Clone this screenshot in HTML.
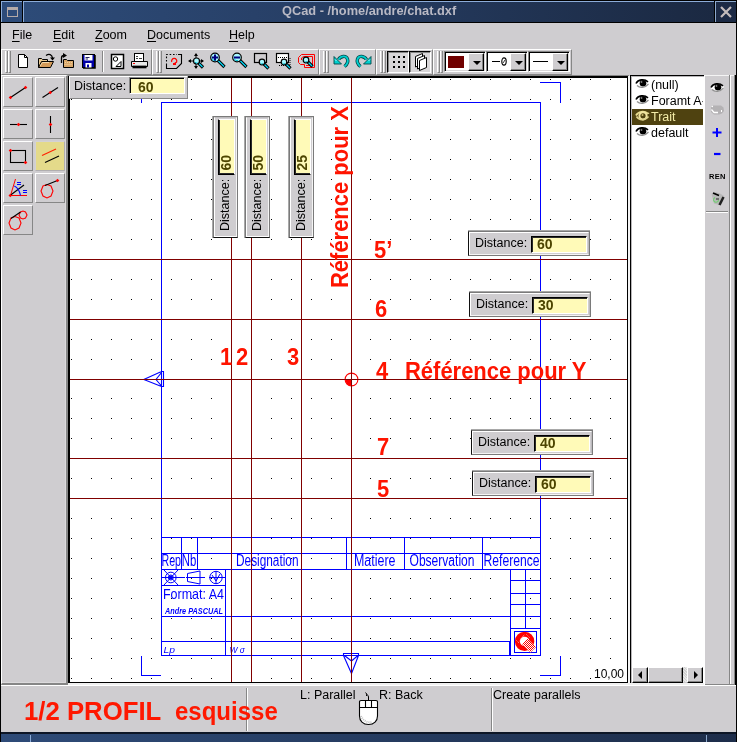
<!DOCTYPE html><html><head><meta charset="utf-8"><style>
*{box-sizing:border-box}
html,body{margin:0;padding:0}
body{width:737px;height:742px;overflow:hidden;background:#cfcdd0;position:relative;font-family:"Liberation Sans",sans-serif;color:#000}
.a{position:absolute}
.t{white-space:pre;line-height:1}
svg{position:absolute;overflow:visible}
</style></head><body><div class="a" style="left:0;top:0;width:737px;height:742px;will-change:transform;overflow:hidden"><div class="a" style="left:0px;top:0px;width:737px;height:23px;background:#000"></div>
<div class="a" style="left:1px;top:1px;width:21px;height:21px;background:#2d4b79;border-top:1px solid #8cacd8;border-left:1px solid #8cacd8"></div>
<div class="a" style="left:7px;top:7px;width:11px;height:10px;border:1px solid #b4aaa8;border-top:3px solid #b4aaa8"></div>
<div class="a" style="left:23px;top:1px;width:691px;height:21px;background:linear-gradient(90deg,#2d4b78 0%,#273f66 40%,#1b2942 100%);border-top:1px solid #8cacd8;border-left:1px solid #8cacd8"></div>
<div class="a t" style="left:282px;top:5px;font-size:12.8px;font-weight:bold;color:#b9b9c4">QCad - /home/andre/chat.dxf</div>
<div class="a" style="left:715px;top:1px;width:21px;height:21px;background:#1c2a45;border-top:1px solid #8ca8cc;border-left:1px solid #8ca8cc"></div>
<svg style="left:715px;top:1px" width="21" height="20"><path d="M6 6L16 16M16 6L6 16" stroke="#c4bcbc" stroke-width="2.2"/></svg>
<div class="a" style="left:0px;top:0px;width:1px;height:742px;background:#000"></div>
<div class="a" style="left:736px;top:0px;width:1px;height:742px;background:#000"></div>
<div class="a t" style="left:12px;top:28.5px;font-size:12.5px"><u style="text-underline-offset:1.5px">F</u>ile</div>
<div class="a t" style="left:53px;top:28.5px;font-size:12.5px"><u style="text-underline-offset:1.5px">E</u>dit</div>
<div class="a t" style="left:95px;top:28.5px;font-size:12.5px"><u style="text-underline-offset:1.5px">Z</u>oom</div>
<div class="a t" style="left:147px;top:28.5px;font-size:12.5px"><u style="text-underline-offset:1.5px">D</u>ocuments</div>
<div class="a t" style="left:229px;top:28.5px;font-size:12.5px"><u style="text-underline-offset:1.5px">H</u>elp</div>
<div class="a" style="left:1px;top:49px;width:151px;height:26px;border-top:1px solid #fff;border-left:1px solid #fff;border-right:1px solid #868686;border-bottom:1px solid #868686"></div>
<div class="a" style="left:152px;top:49px;width:167px;height:26px;border-top:1px solid #fff;border-left:1px solid #fff;border-right:1px solid #868686;border-bottom:1px solid #868686"></div>
<div class="a" style="left:319px;top:49px;width:57px;height:26px;border-top:1px solid #fff;border-left:1px solid #fff;border-right:1px solid #868686;border-bottom:1px solid #868686"></div>
<div class="a" style="left:376px;top:49px;width:57px;height:26px;border-top:1px solid #fff;border-left:1px solid #fff;border-right:1px solid #868686;border-bottom:1px solid #868686"></div>
<div class="a" style="left:433px;top:49px;width:139px;height:26px;border-top:1px solid #fff;border-left:1px solid #fff;border-right:1px solid #868686;border-bottom:1px solid #868686"></div>
<div class="a" style="left:67px;top:75px;width:562px;height:1px;background:#868686"></div>
<div class="a" style="left:5px;top:51px;width:3px;height:22px;border-left:1px solid #fff;border-right:1px solid #868686;border-bottom:1px solid #868686"></div>
<div class="a" style="left:8px;top:51px;width:3px;height:22px;border-left:1px solid #fff;border-right:1px solid #868686;border-bottom:1px solid #868686"></div>
<div class="a" style="left:156px;top:51px;width:3px;height:22px;border-left:1px solid #fff;border-right:1px solid #868686;border-bottom:1px solid #868686"></div>
<div class="a" style="left:159px;top:51px;width:3px;height:22px;border-left:1px solid #fff;border-right:1px solid #868686;border-bottom:1px solid #868686"></div>
<div class="a" style="left:323px;top:51px;width:3px;height:22px;border-left:1px solid #fff;border-right:1px solid #868686;border-bottom:1px solid #868686"></div>
<div class="a" style="left:326px;top:51px;width:3px;height:22px;border-left:1px solid #fff;border-right:1px solid #868686;border-bottom:1px solid #868686"></div>
<div class="a" style="left:380px;top:51px;width:3px;height:22px;border-left:1px solid #fff;border-right:1px solid #868686;border-bottom:1px solid #868686"></div>
<div class="a" style="left:383px;top:51px;width:3px;height:22px;border-left:1px solid #fff;border-right:1px solid #868686;border-bottom:1px solid #868686"></div>
<div class="a" style="left:437px;top:51px;width:3px;height:22px;border-left:1px solid #fff;border-right:1px solid #868686;border-bottom:1px solid #868686"></div>
<div class="a" style="left:440px;top:51px;width:3px;height:22px;border-left:1px solid #fff;border-right:1px solid #868686;border-bottom:1px solid #868686"></div>
<div class="a" style="left:387px;top:51px;width:22px;height:22px;border-top:1px solid #000;border-left:1px solid #000;border-right:1px solid #fff;border-bottom:1px solid #fff;box-shadow:inset 1px 1px 0 #868686;background:#d8d6d8"></div>
<div class="a" style="left:409px;top:51px;width:22px;height:22px;border-top:1px solid #000;border-left:1px solid #000;border-right:1px solid #fff;border-bottom:1px solid #fff;box-shadow:inset 1px 1px 0 #868686;background:#d8d6d8"></div>
<div class="a" style="left:444px;top:51px;width:42px;height:21px;background:#fff;border-top:1px solid #868686;border-left:1px solid #868686;border-right:1px solid #fff;border-bottom:1px solid #fff;box-shadow:inset 1px 1px 0 #000, inset -1px -1px 0 #d8d6d8"></div>
<div class="a" style="left:448px;top:56px;width:16px;height:12px;background:#700000"></div>
<div class="a" style="left:468px;top:53px;width:16px;height:18px;background:#cfcdd0;border-top:1px solid #fff;border-left:1px solid #fff;border-right:1px solid #000;border-bottom:1px solid #000;box-shadow:inset -1px -1px 0 #868686"></div>
<svg style="left:473px;top:61px" width="8" height="4"><path d="M0 0H8L4 4Z" fill="#000"/></svg>
<div class="a" style="left:486px;top:51px;width:42px;height:21px;background:#fff;border-top:1px solid #868686;border-left:1px solid #868686;border-right:1px solid #fff;border-bottom:1px solid #fff;box-shadow:inset 1px 1px 0 #000, inset -1px -1px 0 #d8d6d8"></div>
<div class="a" style="left:492px;top:61px;width:8px;height:1px;background:#000"></div><svg style="left:501px;top:57px" width="7" height="9"><ellipse cx="3" cy="4.5" rx="2.2" ry="3.6" fill="none" stroke="#000" stroke-width="1.1"/><path d="M2 6L4 3" stroke="#000" stroke-width="0.8"/></svg>
<div class="a" style="left:510px;top:53px;width:16px;height:18px;background:#cfcdd0;border-top:1px solid #fff;border-left:1px solid #fff;border-right:1px solid #000;border-bottom:1px solid #000;box-shadow:inset -1px -1px 0 #868686"></div>
<svg style="left:515px;top:61px" width="8" height="4"><path d="M0 0H8L4 4Z" fill="#000"/></svg>
<div class="a" style="left:528px;top:51px;width:42px;height:21px;background:#fff;border-top:1px solid #868686;border-left:1px solid #868686;border-right:1px solid #fff;border-bottom:1px solid #fff;box-shadow:inset 1px 1px 0 #000, inset -1px -1px 0 #d8d6d8"></div>
<div class="a" style="left:533px;top:61px;width:15px;height:1px;background:#000"></div>
<div class="a" style="left:552px;top:53px;width:16px;height:18px;background:#cfcdd0;border-top:1px solid #fff;border-left:1px solid #fff;border-right:1px solid #000;border-bottom:1px solid #000;box-shadow:inset -1px -1px 0 #868686"></div>
<svg style="left:557px;top:61px" width="8" height="4"><path d="M0 0H8L4 4Z" fill="#000"/></svg>
<svg style="left:0;top:45px" width="600" height="33" viewBox="0 45 600 33"><path d="M18.5 54.5H24.5L27.5 57.5V67.5H18.5Z" fill="#fff" stroke="#000"/><path d="M24.5 54.5V57.5H27.5" fill="none" stroke="#000"/><path d="M38.5 67.5V58.5H41.5L42.5 59.5H47.5V61.5" fill="#e8c890" stroke="#000"/><path d="M38.5 67.5L41.5 61.5H53.5L50.5 67.5Z" fill="#d49a58" stroke="#000"/><path d="M40 66L42.5 62.5H49" stroke="#f4dcb0" fill="none"/><path d="M46 55.5C49 53.5 52 54.5 52.5 58" fill="none" stroke="#000" stroke-width="1.3"/><path d="M50 57.5H55L52.5 60.5Z" fill="#000"/><path d="M63.5 67.5V59.5H66.5L67.5 60.5H73.5V67.5Z" fill="#d9a86a" stroke="#000"/><path d="M65 62.5H72M64.5 64.5H72" stroke="#f0d0a0" stroke-dasharray="1 1"/><path d="M61.5 63V58C61.5 56 62.5 55.5 64 55.5" fill="none" stroke="#000" stroke-width="1.3"/><path d="M63 53L67 55.5L63 58Z" fill="#000"/><rect x="82.5" y="54.5" width="12" height="13" fill="#0000a8" stroke="#000"/><rect x="84.5" y="55" width="8" height="5.5" fill="#fff"/><path d="M85.5 57.5H89.5M85.5 59H88" stroke="#202060"/><rect x="85.5" y="63" width="6" height="4.5" fill="#fff"/><rect x="87" y="64.5" width="2" height="3" fill="#0000a8"/><path d="M95.5 55V68.5H83" stroke="#303030" fill="none"/><path d="M102.5 51V72" stroke="#868686"/><path d="M103.5 51V72" stroke="#fff"/><rect x="111.5" y="54.5" width="12" height="14" fill="#fff" stroke="#000" stroke-width="1.5"/><circle cx="115.5" cy="59" r="2.2" fill="none" stroke="#000"/><path d="M121 61.5V66.5H116Z" fill="none" stroke="#000"/><rect x="134.5" y="53.5" width="9" height="8" fill="#fff" stroke="#000"/><path d="M136 56.5H138M136 58.5H138M139 58.5H142" stroke="#404040"/><path d="M131.5 61.5H147.5V66.5H131.5Z" fill="#e8e8e8" stroke="#000"/><path d="M133 63.5H135" stroke="#ff0000" stroke-width="1.2"/><path d="M132.5 65.5H146.5" stroke="#909090"/><path d="M132.5 67.5H146.5" stroke="#000" stroke-width="1.6"/><path d="M166.5 65V54.5H177" fill="none" stroke="#000" stroke-dasharray="1.6 1.8" stroke-width="1.1"/><path d="M178 54.5H181.5V63.5L176.5 68.5H166.5V65" fill="none" stroke="#000" stroke-width="1.1"/><path d="M171.8 62A2.6 2.6 0 1 1 176.6 62L174.5 63.5" fill="none" stroke="#ff0000" stroke-width="1.2"/><path d="M173 63H176V65H173Z" fill="#ff0000"/><path d="M196 54V68M189 61H203" stroke="#000"/><path d="M196 53L194 56H198ZM196 69L194 66H198ZM188 61L191 59V63ZM204 61L201 59V63Z" fill="#000"/><path d="M198.5 63L203.0 67.5" stroke="#000" stroke-width="3.2"/><path d="M199.0 63.5L202.5 67.0" stroke="#00d8f8" stroke-width="1.3"/><circle cx="196.5" cy="61" r="3" fill="#a8f8ff" stroke="#000" stroke-width="1.2"/><path d="M195.0 62A1.8 1.8 0 0 0 197.5 62.8" stroke="#00c0d0" fill="none" stroke-width="1"/><path d="M217 59.5L224.5 67.0" stroke="#000" stroke-width="3.2"/><path d="M217.5 60.0L224.0 66.5" stroke="#00d8f8" stroke-width="1.3"/><circle cx="215" cy="57.5" r="4.3" fill="#a8f8ff" stroke="#000" stroke-width="1.2"/><path d="M212.2 58.5A3.0999999999999996 3.0999999999999996 0 0 0 216 60.599999999999994" stroke="#00c0d0" fill="none" stroke-width="1"/><path d="M212 57.5H218M215 54.5V60.5" stroke="#000080" stroke-width="2"/><path d="M239 59.5L246.5 67.0" stroke="#000" stroke-width="3.2"/><path d="M239.5 60.0L246.0 66.5" stroke="#00d8f8" stroke-width="1.3"/><circle cx="237" cy="57.5" r="4.3" fill="#a8f8ff" stroke="#000" stroke-width="1.2"/><path d="M234.2 58.5A3.0999999999999996 3.0999999999999996 0 0 0 238 60.599999999999994" stroke="#00c0d0" fill="none" stroke-width="1"/><path d="M234 57.5H240" stroke="#000080" stroke-width="2"/><rect x="254.5" y="53.5" width="12" height="9" fill="none" stroke="#000" stroke-width="1.2"/><path d="M264 64L268.5 68.5" stroke="#000" stroke-width="3.2"/><path d="M264.5 64.5L268.0 68.0" stroke="#00d8f8" stroke-width="1.3"/><circle cx="262" cy="62" r="2.8" fill="#a8f8ff" stroke="#000" stroke-width="1.2"/><path d="M260.7 63A1.5999999999999999 1.5999999999999999 0 0 0 263 63.599999999999994" stroke="#00c0d0" fill="none" stroke-width="1"/><rect x="276.5" y="53.5" width="12" height="9" fill="#fff" stroke="#000" stroke-width="1.2"/><path d="M278 57.5H287M279 65.5H290M290 58V66" stroke="#000" stroke-dasharray="1 1"/><path d="M286 64L290.5 68.5" stroke="#000" stroke-width="3.2"/><path d="M286.5 64.5L290.0 68.0" stroke="#00d8f8" stroke-width="1.3"/><circle cx="284" cy="62" r="2.8" fill="#a8f8ff" stroke="#000" stroke-width="1.2"/><path d="M282.7 63A1.5999999999999999 1.5999999999999999 0 0 0 285 63.599999999999994" stroke="#00c0d0" fill="none" stroke-width="1"/><path d="M298.5 60V57.5L301.5 54.5H314.5V67.5H304.5V64.5H300.5L298.5 62.5Z" fill="none" stroke="#ff0000"/><path d="M301.5 60V58L303.5 56.5H312.5V65.5H306" fill="none" stroke="#ff0000"/><path d="M308 62L312.5 66.5" stroke="#000" stroke-width="3.2"/><path d="M308.5 62.5L312.0 66.0" stroke="#00d8f8" stroke-width="1.3"/><circle cx="306" cy="60" r="2.8" fill="#a8f8ff" stroke="#000" stroke-width="1.2"/><path d="M304.7 61A1.5999999999999999 1.5999999999999999 0 0 0 307 61.599999999999994" stroke="#00c0d0" fill="none" stroke-width="1"/><path d="M338.5 59.5C340.5 56 346 55 347.5 59C348.5 62 347 64.5 344.5 66.5" fill="none" stroke="#004848" stroke-width="3.4"/><path d="M338.5 59.5C340.5 56 346 55 347.5 59C348.5 62 347 64.5 344.5 66.5" fill="none" stroke="#00d0d0" stroke-width="1.8"/><path d="M334 56.5L334 64L341.5 64Z" fill="#00d0d0" stroke="#004848" stroke-width="0.9" stroke-linejoin="round"/><path d="M335 59.5L336.5 61" stroke="#a0ffff" stroke-width="1"/><path d="M366.5 59.5C364.5 56 359 55 357.5 59C356.5 62 358 64.5 360.5 66.5" fill="none" stroke="#004848" stroke-width="3.4"/><path d="M366.5 59.5C364.5 56 359 55 357.5 59C356.5 62 358 64.5 360.5 66.5" fill="none" stroke="#00d0d0" stroke-width="1.8"/><path d="M371 56.5L371 64L363.5 64Z" fill="#00d0d0" stroke="#004848" stroke-width="0.9" stroke-linejoin="round"/><path d="M370 59.5L368.5 61" stroke="#a0ffff" stroke-width="1"/><rect x="393" y="56" width="2" height="2" fill="#000"/><rect x="393" y="61" width="2" height="2" fill="#000"/><rect x="393" y="66" width="2" height="2" fill="#000"/><rect x="398" y="56" width="2" height="2" fill="#000"/><rect x="398" y="61" width="2" height="2" fill="#000"/><rect x="398" y="66" width="2" height="2" fill="#000"/><rect x="403" y="56" width="2" height="2" fill="#000"/><rect x="403" y="61" width="2" height="2" fill="#000"/><rect x="403" y="66" width="2" height="2" fill="#000"/><path d="M415.5 56.5L422.5 53.5V64L415.5 67Z" fill="#fff" stroke="#000" stroke-linejoin="round"/><path d="M417.5 58.5L424.5 55.5V66L417.5 69Z" fill="#fff" stroke="#000" stroke-linejoin="round"/><path d="M419.5 60.5L426.5 57.5V67.5L419.5 70.5Z" fill="#fff" stroke="#000" stroke-linejoin="round"/></svg>
<div class="a" style="left:1px;top:75px;width:67px;height:610px;border-top:1px solid #fff;border-left:1px solid #fff;border-right:2px solid #868686;border-bottom:2px solid #868686;box-shadow:inset -1px -1px 0 #dcdadc"></div>
<div class="a" style="left:3px;top:77px;width:30px;height:30px;background:#cfcdd0;border-top:1px solid #fff;border-left:1px solid #fff;border-right:1px solid #868686;border-bottom:1px solid #868686"></div>
<div class="a" style="left:35px;top:77px;width:30px;height:30px;background:#cfcdd0;border-top:1px solid #fff;border-left:1px solid #fff;border-right:1px solid #868686;border-bottom:1px solid #868686"></div>
<div class="a" style="left:3px;top:109px;width:30px;height:30px;background:#cfcdd0;border-top:1px solid #fff;border-left:1px solid #fff;border-right:1px solid #868686;border-bottom:1px solid #868686"></div>
<div class="a" style="left:35px;top:109px;width:30px;height:30px;background:#cfcdd0;border-top:1px solid #fff;border-left:1px solid #fff;border-right:1px solid #868686;border-bottom:1px solid #868686"></div>
<div class="a" style="left:3px;top:141px;width:30px;height:30px;background:#cfcdd0;border-top:1px solid #fff;border-left:1px solid #fff;border-right:1px solid #868686;border-bottom:1px solid #868686"></div>
<div class="a" style="left:35px;top:141px;width:30px;height:30px;background:#e4da8a;border:1px solid #d4d2d4;border-right-color:#b0aeb0;border-bottom-color:#b0aeb0"></div>
<div class="a" style="left:3px;top:173px;width:30px;height:30px;background:#cfcdd0;border-top:1px solid #fff;border-left:1px solid #fff;border-right:1px solid #868686;border-bottom:1px solid #868686"></div>
<div class="a" style="left:35px;top:173px;width:30px;height:30px;background:#cfcdd0;border-top:1px solid #fff;border-left:1px solid #fff;border-right:1px solid #868686;border-bottom:1px solid #868686"></div>
<div class="a" style="left:3px;top:205px;width:30px;height:30px;background:#cfcdd0;border-top:1px solid #fff;border-left:1px solid #fff;border-right:1px solid #868686;border-bottom:1px solid #868686"></div>
<svg style="left:0;top:74px" width="68" height="170" viewBox="0 74 68 170"><path d="M10.5 97.5L25.5 87.5" stroke="#000" stroke-width="1.1"/><path d="M10.5 95.7L12.3 97.5L10.5 99.3L8.7 97.5Z" fill="#ff0000"/><path d="M25.5 85.7L27.3 87.5L25.5 89.3L23.7 87.5Z" fill="#ff0000"/><path d="M42.5 97.5L58 87.5" stroke="#000" stroke-width="1.1"/><path d="M50.3 90.7L52.099999999999994 92.5L50.3 94.3L48.5 92.5Z" fill="#ff0000"/><path d="M10 124.5H27" stroke="#000" stroke-width="1.1"/><path d="M18.5 122.7L20.3 124.5L18.5 126.3L16.7 124.5Z" fill="#ff0000"/><path d="M50.5 116V133" stroke="#000" stroke-width="1.1"/><path d="M50.5 122.7L52.3 124.5L50.5 126.3L48.7 124.5Z" fill="#ff0000"/><rect x="10.5" y="150.5" width="15" height="12" fill="none" stroke="#000" stroke-width="1.1"/><path d="M10.5 148.7L12.3 150.5L10.5 152.3L8.7 150.5Z" fill="#ff0000"/><path d="M25.5 160.7L27.3 162.5L25.5 164.3L23.7 162.5Z" fill="#ff0000"/><path d="M42 155.5L56 149" stroke="#ff2000" stroke-width="1.1"/><path d="M45 162.5L59 156" stroke="#000" stroke-width="1.1"/><path d="M10.5 195.5L15.5 179M10 195.5H27" stroke="#ff0000" stroke-width="1"/><path d="M10 195.5L24 185" stroke="#000" stroke-width="1.1"/><path d="M14.3 186Q19 188 20.5 195.5" stroke="#0000ff" fill="none" stroke-width="1.1"/><rect x="17" y="182" width="4" height="1" fill="#0000ff"/><rect x="17" y="184" width="4" height="1" fill="#0000ff"/><rect x="23" y="190" width="4" height="1" fill="#0000ff"/><rect x="23" y="192" width="4" height="1" fill="#0000ff"/><path d="M10.3 193.7L12.100000000000001 195.5L10.3 197.3L8.5 195.5Z" fill="#ff0000"/><path d="M41 191L43 186L47 184.5L51 186L53 191L51 196L47 198L43 196Z" fill="none" stroke="#ff0000" stroke-width="1.1"/><path d="M45 185.5L57.5 180.5" stroke="#000" stroke-width="1.1"/><path d="M57.5 178.7L59.3 180.5L57.5 182.3L55.7 180.5Z" fill="#ff0000"/><path d="M9 223L11 218L15 216.5L19 218L21 223L19 228L15 230L11 228Z" fill="none" stroke="#ff0000" stroke-width="1.1"/><path d="M19 215L20.5 212L23 211L25.5 212L27 215L25.5 218L23 219L20.5 218Z" fill="none" stroke="#ff0000" stroke-width="1.1"/><path d="M11 218.5L20.5 212" stroke="#000" stroke-width="1.1"/></svg>
<div class="a" style="left:68px;top:76px;width:560px;height:607px;background:#fff;border:1px solid #000"></div>
<div class="a" style="left:69px;top:77px;width:1px;height:605px;background:#000"></div>
<div class="a" style="left:69px;top:77px;width:558px;height:1px;background:#000"></div>
<svg style="left:70px;top:78px" width="557" height="604" viewBox="70 78 557 604" shape-rendering="crispEdges"><path fill="#000" d="M71 79h1v1h-1zM71 99h1v1h-1zM71 119h1v1h-1zM71 139h1v1h-1zM71 159h1v1h-1zM71 179h1v1h-1zM71 199h1v1h-1zM71 219h1v1h-1zM71 239h1v1h-1zM71 259h1v1h-1zM71 279h1v1h-1zM71 299h1v1h-1zM71 319h1v1h-1zM71 339h1v1h-1zM71 359h1v1h-1zM71 379h1v1h-1zM71 398h1v1h-1zM71 418h1v1h-1zM71 438h1v1h-1zM71 458h1v1h-1zM71 478h1v1h-1zM71 498h1v1h-1zM71 518h1v1h-1zM71 538h1v1h-1zM71 558h1v1h-1zM71 578h1v1h-1zM71 598h1v1h-1zM71 618h1v1h-1zM71 638h1v1h-1zM71 658h1v1h-1zM71 678h1v1h-1zM91 79h1v1h-1zM91 99h1v1h-1zM91 119h1v1h-1zM91 139h1v1h-1zM91 159h1v1h-1zM91 179h1v1h-1zM91 199h1v1h-1zM91 219h1v1h-1zM91 239h1v1h-1zM91 259h1v1h-1zM91 279h1v1h-1zM91 299h1v1h-1zM91 319h1v1h-1zM91 339h1v1h-1zM91 359h1v1h-1zM91 379h1v1h-1zM91 398h1v1h-1zM91 418h1v1h-1zM91 438h1v1h-1zM91 458h1v1h-1zM91 478h1v1h-1zM91 498h1v1h-1zM91 518h1v1h-1zM91 538h1v1h-1zM91 558h1v1h-1zM91 578h1v1h-1zM91 598h1v1h-1zM91 618h1v1h-1zM91 638h1v1h-1zM91 658h1v1h-1zM91 678h1v1h-1zM111 79h1v1h-1zM111 99h1v1h-1zM111 119h1v1h-1zM111 139h1v1h-1zM111 159h1v1h-1zM111 179h1v1h-1zM111 199h1v1h-1zM111 219h1v1h-1zM111 239h1v1h-1zM111 259h1v1h-1zM111 279h1v1h-1zM111 299h1v1h-1zM111 319h1v1h-1zM111 339h1v1h-1zM111 359h1v1h-1zM111 379h1v1h-1zM111 398h1v1h-1zM111 418h1v1h-1zM111 438h1v1h-1zM111 458h1v1h-1zM111 478h1v1h-1zM111 498h1v1h-1zM111 518h1v1h-1zM111 538h1v1h-1zM111 558h1v1h-1zM111 578h1v1h-1zM111 598h1v1h-1zM111 618h1v1h-1zM111 638h1v1h-1zM111 658h1v1h-1zM111 678h1v1h-1zM131 79h1v1h-1zM131 99h1v1h-1zM131 119h1v1h-1zM131 139h1v1h-1zM131 159h1v1h-1zM131 179h1v1h-1zM131 199h1v1h-1zM131 219h1v1h-1zM131 239h1v1h-1zM131 259h1v1h-1zM131 279h1v1h-1zM131 299h1v1h-1zM131 319h1v1h-1zM131 339h1v1h-1zM131 359h1v1h-1zM131 379h1v1h-1zM131 398h1v1h-1zM131 418h1v1h-1zM131 438h1v1h-1zM131 458h1v1h-1zM131 478h1v1h-1zM131 498h1v1h-1zM131 518h1v1h-1zM131 538h1v1h-1zM131 558h1v1h-1zM131 578h1v1h-1zM131 598h1v1h-1zM131 618h1v1h-1zM131 638h1v1h-1zM131 658h1v1h-1zM131 678h1v1h-1zM151 79h1v1h-1zM151 99h1v1h-1zM151 119h1v1h-1zM151 139h1v1h-1zM151 159h1v1h-1zM151 179h1v1h-1zM151 199h1v1h-1zM151 219h1v1h-1zM151 239h1v1h-1zM151 259h1v1h-1zM151 279h1v1h-1zM151 299h1v1h-1zM151 319h1v1h-1zM151 339h1v1h-1zM151 359h1v1h-1zM151 379h1v1h-1zM151 398h1v1h-1zM151 418h1v1h-1zM151 438h1v1h-1zM151 458h1v1h-1zM151 478h1v1h-1zM151 498h1v1h-1zM151 518h1v1h-1zM151 538h1v1h-1zM151 558h1v1h-1zM151 578h1v1h-1zM151 598h1v1h-1zM151 618h1v1h-1zM151 638h1v1h-1zM151 658h1v1h-1zM151 678h1v1h-1zM171 79h1v1h-1zM171 99h1v1h-1zM171 119h1v1h-1zM171 139h1v1h-1zM171 159h1v1h-1zM171 179h1v1h-1zM171 199h1v1h-1zM171 219h1v1h-1zM171 239h1v1h-1zM171 259h1v1h-1zM171 279h1v1h-1zM171 299h1v1h-1zM171 319h1v1h-1zM171 339h1v1h-1zM171 359h1v1h-1zM171 379h1v1h-1zM171 398h1v1h-1zM171 418h1v1h-1zM171 438h1v1h-1zM171 458h1v1h-1zM171 478h1v1h-1zM171 498h1v1h-1zM171 518h1v1h-1zM171 538h1v1h-1zM171 558h1v1h-1zM171 578h1v1h-1zM171 598h1v1h-1zM171 618h1v1h-1zM171 638h1v1h-1zM171 658h1v1h-1zM171 678h1v1h-1zM191 79h1v1h-1zM191 99h1v1h-1zM191 119h1v1h-1zM191 139h1v1h-1zM191 159h1v1h-1zM191 179h1v1h-1zM191 199h1v1h-1zM191 219h1v1h-1zM191 239h1v1h-1zM191 259h1v1h-1zM191 279h1v1h-1zM191 299h1v1h-1zM191 319h1v1h-1zM191 339h1v1h-1zM191 359h1v1h-1zM191 379h1v1h-1zM191 398h1v1h-1zM191 418h1v1h-1zM191 438h1v1h-1zM191 458h1v1h-1zM191 478h1v1h-1zM191 498h1v1h-1zM191 518h1v1h-1zM191 538h1v1h-1zM191 558h1v1h-1zM191 578h1v1h-1zM191 598h1v1h-1zM191 618h1v1h-1zM191 638h1v1h-1zM191 658h1v1h-1zM191 678h1v1h-1zM211 79h1v1h-1zM211 99h1v1h-1zM211 119h1v1h-1zM211 139h1v1h-1zM211 159h1v1h-1zM211 179h1v1h-1zM211 199h1v1h-1zM211 219h1v1h-1zM211 239h1v1h-1zM211 259h1v1h-1zM211 279h1v1h-1zM211 299h1v1h-1zM211 319h1v1h-1zM211 339h1v1h-1zM211 359h1v1h-1zM211 379h1v1h-1zM211 398h1v1h-1zM211 418h1v1h-1zM211 438h1v1h-1zM211 458h1v1h-1zM211 478h1v1h-1zM211 498h1v1h-1zM211 518h1v1h-1zM211 538h1v1h-1zM211 558h1v1h-1zM211 578h1v1h-1zM211 598h1v1h-1zM211 618h1v1h-1zM211 638h1v1h-1zM211 658h1v1h-1zM211 678h1v1h-1zM231 79h1v1h-1zM231 99h1v1h-1zM231 119h1v1h-1zM231 139h1v1h-1zM231 159h1v1h-1zM231 179h1v1h-1zM231 199h1v1h-1zM231 219h1v1h-1zM231 239h1v1h-1zM231 259h1v1h-1zM231 279h1v1h-1zM231 299h1v1h-1zM231 319h1v1h-1zM231 339h1v1h-1zM231 359h1v1h-1zM231 379h1v1h-1zM231 398h1v1h-1zM231 418h1v1h-1zM231 438h1v1h-1zM231 458h1v1h-1zM231 478h1v1h-1zM231 498h1v1h-1zM231 518h1v1h-1zM231 538h1v1h-1zM231 558h1v1h-1zM231 578h1v1h-1zM231 598h1v1h-1zM231 618h1v1h-1zM231 638h1v1h-1zM231 658h1v1h-1zM231 678h1v1h-1zM251 79h1v1h-1zM251 99h1v1h-1zM251 119h1v1h-1zM251 139h1v1h-1zM251 159h1v1h-1zM251 179h1v1h-1zM251 199h1v1h-1zM251 219h1v1h-1zM251 239h1v1h-1zM251 259h1v1h-1zM251 279h1v1h-1zM251 299h1v1h-1zM251 319h1v1h-1zM251 339h1v1h-1zM251 359h1v1h-1zM251 379h1v1h-1zM251 398h1v1h-1zM251 418h1v1h-1zM251 438h1v1h-1zM251 458h1v1h-1zM251 478h1v1h-1zM251 498h1v1h-1zM251 518h1v1h-1zM251 538h1v1h-1zM251 558h1v1h-1zM251 578h1v1h-1zM251 598h1v1h-1zM251 618h1v1h-1zM251 638h1v1h-1zM251 658h1v1h-1zM251 678h1v1h-1zM271 79h1v1h-1zM271 99h1v1h-1zM271 119h1v1h-1zM271 139h1v1h-1zM271 159h1v1h-1zM271 179h1v1h-1zM271 199h1v1h-1zM271 219h1v1h-1zM271 239h1v1h-1zM271 259h1v1h-1zM271 279h1v1h-1zM271 299h1v1h-1zM271 319h1v1h-1zM271 339h1v1h-1zM271 359h1v1h-1zM271 379h1v1h-1zM271 398h1v1h-1zM271 418h1v1h-1zM271 438h1v1h-1zM271 458h1v1h-1zM271 478h1v1h-1zM271 498h1v1h-1zM271 518h1v1h-1zM271 538h1v1h-1zM271 558h1v1h-1zM271 578h1v1h-1zM271 598h1v1h-1zM271 618h1v1h-1zM271 638h1v1h-1zM271 658h1v1h-1zM271 678h1v1h-1zM291 79h1v1h-1zM291 99h1v1h-1zM291 119h1v1h-1zM291 139h1v1h-1zM291 159h1v1h-1zM291 179h1v1h-1zM291 199h1v1h-1zM291 219h1v1h-1zM291 239h1v1h-1zM291 259h1v1h-1zM291 279h1v1h-1zM291 299h1v1h-1zM291 319h1v1h-1zM291 339h1v1h-1zM291 359h1v1h-1zM291 379h1v1h-1zM291 398h1v1h-1zM291 418h1v1h-1zM291 438h1v1h-1zM291 458h1v1h-1zM291 478h1v1h-1zM291 498h1v1h-1zM291 518h1v1h-1zM291 538h1v1h-1zM291 558h1v1h-1zM291 578h1v1h-1zM291 598h1v1h-1zM291 618h1v1h-1zM291 638h1v1h-1zM291 658h1v1h-1zM291 678h1v1h-1zM311 79h1v1h-1zM311 99h1v1h-1zM311 119h1v1h-1zM311 139h1v1h-1zM311 159h1v1h-1zM311 179h1v1h-1zM311 199h1v1h-1zM311 219h1v1h-1zM311 239h1v1h-1zM311 259h1v1h-1zM311 279h1v1h-1zM311 299h1v1h-1zM311 319h1v1h-1zM311 339h1v1h-1zM311 359h1v1h-1zM311 379h1v1h-1zM311 398h1v1h-1zM311 418h1v1h-1zM311 438h1v1h-1zM311 458h1v1h-1zM311 478h1v1h-1zM311 498h1v1h-1zM311 518h1v1h-1zM311 538h1v1h-1zM311 558h1v1h-1zM311 578h1v1h-1zM311 598h1v1h-1zM311 618h1v1h-1zM311 638h1v1h-1zM311 658h1v1h-1zM311 678h1v1h-1zM331 79h1v1h-1zM331 99h1v1h-1zM331 119h1v1h-1zM331 139h1v1h-1zM331 159h1v1h-1zM331 179h1v1h-1zM331 199h1v1h-1zM331 219h1v1h-1zM331 239h1v1h-1zM331 259h1v1h-1zM331 279h1v1h-1zM331 299h1v1h-1zM331 319h1v1h-1zM331 339h1v1h-1zM331 359h1v1h-1zM331 379h1v1h-1zM331 398h1v1h-1zM331 418h1v1h-1zM331 438h1v1h-1zM331 458h1v1h-1zM331 478h1v1h-1zM331 498h1v1h-1zM331 518h1v1h-1zM331 538h1v1h-1zM331 558h1v1h-1zM331 578h1v1h-1zM331 598h1v1h-1zM331 618h1v1h-1zM331 638h1v1h-1zM331 658h1v1h-1zM331 678h1v1h-1zM351 79h1v1h-1zM351 99h1v1h-1zM351 119h1v1h-1zM351 139h1v1h-1zM351 159h1v1h-1zM351 179h1v1h-1zM351 199h1v1h-1zM351 219h1v1h-1zM351 239h1v1h-1zM351 259h1v1h-1zM351 279h1v1h-1zM351 299h1v1h-1zM351 319h1v1h-1zM351 339h1v1h-1zM351 359h1v1h-1zM351 379h1v1h-1zM351 398h1v1h-1zM351 418h1v1h-1zM351 438h1v1h-1zM351 458h1v1h-1zM351 478h1v1h-1zM351 498h1v1h-1zM351 518h1v1h-1zM351 538h1v1h-1zM351 558h1v1h-1zM351 578h1v1h-1zM351 598h1v1h-1zM351 618h1v1h-1zM351 638h1v1h-1zM351 658h1v1h-1zM351 678h1v1h-1zM370 79h1v1h-1zM370 99h1v1h-1zM370 119h1v1h-1zM370 139h1v1h-1zM370 159h1v1h-1zM370 179h1v1h-1zM370 199h1v1h-1zM370 219h1v1h-1zM370 239h1v1h-1zM370 259h1v1h-1zM370 279h1v1h-1zM370 299h1v1h-1zM370 319h1v1h-1zM370 339h1v1h-1zM370 359h1v1h-1zM370 379h1v1h-1zM370 398h1v1h-1zM370 418h1v1h-1zM370 438h1v1h-1zM370 458h1v1h-1zM370 478h1v1h-1zM370 498h1v1h-1zM370 518h1v1h-1zM370 538h1v1h-1zM370 558h1v1h-1zM370 578h1v1h-1zM370 598h1v1h-1zM370 618h1v1h-1zM370 638h1v1h-1zM370 658h1v1h-1zM370 678h1v1h-1zM390 79h1v1h-1zM390 99h1v1h-1zM390 119h1v1h-1zM390 139h1v1h-1zM390 159h1v1h-1zM390 179h1v1h-1zM390 199h1v1h-1zM390 219h1v1h-1zM390 239h1v1h-1zM390 259h1v1h-1zM390 279h1v1h-1zM390 299h1v1h-1zM390 319h1v1h-1zM390 339h1v1h-1zM390 359h1v1h-1zM390 379h1v1h-1zM390 398h1v1h-1zM390 418h1v1h-1zM390 438h1v1h-1zM390 458h1v1h-1zM390 478h1v1h-1zM390 498h1v1h-1zM390 518h1v1h-1zM390 538h1v1h-1zM390 558h1v1h-1zM390 578h1v1h-1zM390 598h1v1h-1zM390 618h1v1h-1zM390 638h1v1h-1zM390 658h1v1h-1zM390 678h1v1h-1zM410 79h1v1h-1zM410 99h1v1h-1zM410 119h1v1h-1zM410 139h1v1h-1zM410 159h1v1h-1zM410 179h1v1h-1zM410 199h1v1h-1zM410 219h1v1h-1zM410 239h1v1h-1zM410 259h1v1h-1zM410 279h1v1h-1zM410 299h1v1h-1zM410 319h1v1h-1zM410 339h1v1h-1zM410 359h1v1h-1zM410 379h1v1h-1zM410 398h1v1h-1zM410 418h1v1h-1zM410 438h1v1h-1zM410 458h1v1h-1zM410 478h1v1h-1zM410 498h1v1h-1zM410 518h1v1h-1zM410 538h1v1h-1zM410 558h1v1h-1zM410 578h1v1h-1zM410 598h1v1h-1zM410 618h1v1h-1zM410 638h1v1h-1zM410 658h1v1h-1zM410 678h1v1h-1zM430 79h1v1h-1zM430 99h1v1h-1zM430 119h1v1h-1zM430 139h1v1h-1zM430 159h1v1h-1zM430 179h1v1h-1zM430 199h1v1h-1zM430 219h1v1h-1zM430 239h1v1h-1zM430 259h1v1h-1zM430 279h1v1h-1zM430 299h1v1h-1zM430 319h1v1h-1zM430 339h1v1h-1zM430 359h1v1h-1zM430 379h1v1h-1zM430 398h1v1h-1zM430 418h1v1h-1zM430 438h1v1h-1zM430 458h1v1h-1zM430 478h1v1h-1zM430 498h1v1h-1zM430 518h1v1h-1zM430 538h1v1h-1zM430 558h1v1h-1zM430 578h1v1h-1zM430 598h1v1h-1zM430 618h1v1h-1zM430 638h1v1h-1zM430 658h1v1h-1zM430 678h1v1h-1zM450 79h1v1h-1zM450 99h1v1h-1zM450 119h1v1h-1zM450 139h1v1h-1zM450 159h1v1h-1zM450 179h1v1h-1zM450 199h1v1h-1zM450 219h1v1h-1zM450 239h1v1h-1zM450 259h1v1h-1zM450 279h1v1h-1zM450 299h1v1h-1zM450 319h1v1h-1zM450 339h1v1h-1zM450 359h1v1h-1zM450 379h1v1h-1zM450 398h1v1h-1zM450 418h1v1h-1zM450 438h1v1h-1zM450 458h1v1h-1zM450 478h1v1h-1zM450 498h1v1h-1zM450 518h1v1h-1zM450 538h1v1h-1zM450 558h1v1h-1zM450 578h1v1h-1zM450 598h1v1h-1zM450 618h1v1h-1zM450 638h1v1h-1zM450 658h1v1h-1zM450 678h1v1h-1zM470 79h1v1h-1zM470 99h1v1h-1zM470 119h1v1h-1zM470 139h1v1h-1zM470 159h1v1h-1zM470 179h1v1h-1zM470 199h1v1h-1zM470 219h1v1h-1zM470 239h1v1h-1zM470 259h1v1h-1zM470 279h1v1h-1zM470 299h1v1h-1zM470 319h1v1h-1zM470 339h1v1h-1zM470 359h1v1h-1zM470 379h1v1h-1zM470 398h1v1h-1zM470 418h1v1h-1zM470 438h1v1h-1zM470 458h1v1h-1zM470 478h1v1h-1zM470 498h1v1h-1zM470 518h1v1h-1zM470 538h1v1h-1zM470 558h1v1h-1zM470 578h1v1h-1zM470 598h1v1h-1zM470 618h1v1h-1zM470 638h1v1h-1zM470 658h1v1h-1zM470 678h1v1h-1zM490 79h1v1h-1zM490 99h1v1h-1zM490 119h1v1h-1zM490 139h1v1h-1zM490 159h1v1h-1zM490 179h1v1h-1zM490 199h1v1h-1zM490 219h1v1h-1zM490 239h1v1h-1zM490 259h1v1h-1zM490 279h1v1h-1zM490 299h1v1h-1zM490 319h1v1h-1zM490 339h1v1h-1zM490 359h1v1h-1zM490 379h1v1h-1zM490 398h1v1h-1zM490 418h1v1h-1zM490 438h1v1h-1zM490 458h1v1h-1zM490 478h1v1h-1zM490 498h1v1h-1zM490 518h1v1h-1zM490 538h1v1h-1zM490 558h1v1h-1zM490 578h1v1h-1zM490 598h1v1h-1zM490 618h1v1h-1zM490 638h1v1h-1zM490 658h1v1h-1zM490 678h1v1h-1zM510 79h1v1h-1zM510 99h1v1h-1zM510 119h1v1h-1zM510 139h1v1h-1zM510 159h1v1h-1zM510 179h1v1h-1zM510 199h1v1h-1zM510 219h1v1h-1zM510 239h1v1h-1zM510 259h1v1h-1zM510 279h1v1h-1zM510 299h1v1h-1zM510 319h1v1h-1zM510 339h1v1h-1zM510 359h1v1h-1zM510 379h1v1h-1zM510 398h1v1h-1zM510 418h1v1h-1zM510 438h1v1h-1zM510 458h1v1h-1zM510 478h1v1h-1zM510 498h1v1h-1zM510 518h1v1h-1zM510 538h1v1h-1zM510 558h1v1h-1zM510 578h1v1h-1zM510 598h1v1h-1zM510 618h1v1h-1zM510 638h1v1h-1zM510 658h1v1h-1zM510 678h1v1h-1zM530 79h1v1h-1zM530 99h1v1h-1zM530 119h1v1h-1zM530 139h1v1h-1zM530 159h1v1h-1zM530 179h1v1h-1zM530 199h1v1h-1zM530 219h1v1h-1zM530 239h1v1h-1zM530 259h1v1h-1zM530 279h1v1h-1zM530 299h1v1h-1zM530 319h1v1h-1zM530 339h1v1h-1zM530 359h1v1h-1zM530 379h1v1h-1zM530 398h1v1h-1zM530 418h1v1h-1zM530 438h1v1h-1zM530 458h1v1h-1zM530 478h1v1h-1zM530 498h1v1h-1zM530 518h1v1h-1zM530 538h1v1h-1zM530 558h1v1h-1zM530 578h1v1h-1zM530 598h1v1h-1zM530 618h1v1h-1zM530 638h1v1h-1zM530 658h1v1h-1zM530 678h1v1h-1zM550 79h1v1h-1zM550 99h1v1h-1zM550 119h1v1h-1zM550 139h1v1h-1zM550 159h1v1h-1zM550 179h1v1h-1zM550 199h1v1h-1zM550 219h1v1h-1zM550 239h1v1h-1zM550 259h1v1h-1zM550 279h1v1h-1zM550 299h1v1h-1zM550 319h1v1h-1zM550 339h1v1h-1zM550 359h1v1h-1zM550 379h1v1h-1zM550 398h1v1h-1zM550 418h1v1h-1zM550 438h1v1h-1zM550 458h1v1h-1zM550 478h1v1h-1zM550 498h1v1h-1zM550 518h1v1h-1zM550 538h1v1h-1zM550 558h1v1h-1zM550 578h1v1h-1zM550 598h1v1h-1zM550 618h1v1h-1zM550 638h1v1h-1zM550 658h1v1h-1zM550 678h1v1h-1zM570 79h1v1h-1zM570 99h1v1h-1zM570 119h1v1h-1zM570 139h1v1h-1zM570 159h1v1h-1zM570 179h1v1h-1zM570 199h1v1h-1zM570 219h1v1h-1zM570 239h1v1h-1zM570 259h1v1h-1zM570 279h1v1h-1zM570 299h1v1h-1zM570 319h1v1h-1zM570 339h1v1h-1zM570 359h1v1h-1zM570 379h1v1h-1zM570 398h1v1h-1zM570 418h1v1h-1zM570 438h1v1h-1zM570 458h1v1h-1zM570 478h1v1h-1zM570 498h1v1h-1zM570 518h1v1h-1zM570 538h1v1h-1zM570 558h1v1h-1zM570 578h1v1h-1zM570 598h1v1h-1zM570 618h1v1h-1zM570 638h1v1h-1zM570 658h1v1h-1zM570 678h1v1h-1zM590 79h1v1h-1zM590 99h1v1h-1zM590 119h1v1h-1zM590 139h1v1h-1zM590 159h1v1h-1zM590 179h1v1h-1zM590 199h1v1h-1zM590 219h1v1h-1zM590 239h1v1h-1zM590 259h1v1h-1zM590 279h1v1h-1zM590 299h1v1h-1zM590 319h1v1h-1zM590 339h1v1h-1zM590 359h1v1h-1zM590 379h1v1h-1zM590 398h1v1h-1zM590 418h1v1h-1zM590 438h1v1h-1zM590 458h1v1h-1zM590 478h1v1h-1zM590 498h1v1h-1zM590 518h1v1h-1zM590 538h1v1h-1zM590 558h1v1h-1zM590 578h1v1h-1zM590 598h1v1h-1zM590 618h1v1h-1zM590 638h1v1h-1zM590 658h1v1h-1zM590 678h1v1h-1zM610 79h1v1h-1zM610 99h1v1h-1zM610 119h1v1h-1zM610 139h1v1h-1zM610 159h1v1h-1zM610 179h1v1h-1zM610 199h1v1h-1zM610 219h1v1h-1zM610 239h1v1h-1zM610 259h1v1h-1zM610 279h1v1h-1zM610 299h1v1h-1zM610 319h1v1h-1zM610 339h1v1h-1zM610 359h1v1h-1zM610 379h1v1h-1zM610 398h1v1h-1zM610 418h1v1h-1zM610 438h1v1h-1zM610 458h1v1h-1zM610 478h1v1h-1zM610 498h1v1h-1zM610 518h1v1h-1zM610 538h1v1h-1zM610 558h1v1h-1zM610 578h1v1h-1zM610 598h1v1h-1zM610 618h1v1h-1zM610 638h1v1h-1zM610 658h1v1h-1zM610 678h1v1h-1z"/><rect x="161.5" y="102.5" width="379" height="553" fill="none" stroke="#0000ff"/><path d="M141.5 80V102.5M141.5 656V675.5H161M540 82.5H560.5V103M560.5 656V675.5H540" fill="none" stroke="#0000ff"/><path d="M161 537.5H541M161 553.5H541M161 569.5H541M181.5 537V569M197.5 537V569M346.5 537V569M404.5 537V569M482.5 537V569M161 585.5H226M225.5 569V655M161 616.5H510M161 641.5H510M509.5 641V655M510.5 569V655M525.5 569V628M510 580.5H541M510 593.5H541M510 604.5H541M510 616.5H541M510 628.5H541" fill="none" stroke="#0000ff"/><rect x="514.5" y="631.5" width="22" height="21" fill="none" stroke="#0000ff"/><text x="161.5" y="565.6" font-size="16" textLength="19.5" lengthAdjust="spacingAndGlyphs" fill="#0000ff" font-family="Liberation Sans" >Rep</text><text x="181.8" y="565.6" font-size="16" textLength="14.5" lengthAdjust="spacingAndGlyphs" fill="#0000ff" font-family="Liberation Sans" >Nb</text><text x="236" y="565.6" font-size="16" textLength="62.5" lengthAdjust="spacingAndGlyphs" fill="#0000ff" font-family="Liberation Sans" >Designation</text><text x="354" y="565.6" font-size="16" textLength="41.5" lengthAdjust="spacingAndGlyphs" fill="#0000ff" font-family="Liberation Sans" >Matiere</text><text x="409.5" y="565.6" font-size="16" textLength="65" lengthAdjust="spacingAndGlyphs" fill="#0000ff" font-family="Liberation Sans" >Observation</text><text x="483.5" y="565.6" font-size="16" textLength="56" lengthAdjust="spacingAndGlyphs" fill="#0000ff" font-family="Liberation Sans" >Reference</text><text x="163" y="599" font-size="15" textLength="61" lengthAdjust="spacingAndGlyphs" fill="#0000ff" font-family="Liberation Sans" >Format: A4</text><text x="165" y="613.7" font-size="8.8" textLength="58" lengthAdjust="spacingAndGlyphs" fill="#0000ff" font-family="Liberation Sans" font-style="italic" font-weight="bold">Andre PASCUAL</text><text x="163.5" y="653.3" font-size="9" textLength="11.5" lengthAdjust="spacingAndGlyphs" fill="#0000ff" font-family="Liberation Sans" font-style="italic">Lp</text><text x="229.5" y="653.3" font-size="9" textLength="15.5" lengthAdjust="spacingAndGlyphs" fill="#0000ff" font-family="Liberation Sans" font-style="italic">W σ</text><g fill="none" stroke="#0000ff" stroke-width="1" shape-rendering="auto"><circle cx="170.8" cy="577.5" r="5.3"/><circle cx="170.8" cy="577.5" r="2.5"/><path d="M164 570L178 585M178 570L164 585M162 577.5H185"/><path d="M186 577.5H205M187.5 573.5L200 571V584L187.5 581.5Z"/><circle cx="216" cy="577.5" r="6.2"/><path d="M216 571V584M209 577.5H225M212 575L216 581L220 574"/><circle cx="170.8" cy="577.5" r="1.6" fill="#0000ff"/></g><defs><pattern id="chk" width="2" height="2" patternUnits="userSpaceOnUse" x="0" y="0"><rect width="1" height="1" fill="#ff0000"/><rect x="1" y="1" width="1" height="1" fill="#ff0000"/></pattern></defs><g shape-rendering="auto"><circle cx="524.6" cy="641.4" r="7.2" fill="none" stroke="#ff0000" stroke-width="5"/><path d="M522 644L527.5 638.5L536 647L530.5 652.5Z" fill="#fff"/><path d="M522 644L527.5 638.5L536 647L530.5 652.5Z" fill="url(#chk)"/><path d="M518.5 642.5L523 636.5M521 638.5L524.5 634.5M526.5 634.5L530 638M516.5 640.5L519 643" stroke="#ffd8d8" stroke-width="0.8" stroke-dasharray="0.8 0.9" fill="none"/></g><path d="M161.5 371.5H163.5V386.5H161.5ZM161.5 371.5L143.8 379.5L161.5 386.5M161.5 372.5L156 379.5L161.5 386" fill="none" stroke="#0000ff" shape-rendering="auto" stroke-width="1.1"/><path d="M343.5 653.5H358.5V655.5H343.5ZM343.5 655.5L351.5 673.5L358.5 655.5M344.5 655.5L351.5 661L358 655.5" fill="none" stroke="#0000ff" shape-rendering="auto" stroke-width="1.1"/><path d="M231.5 78V682M251.5 78V682M301.5 78V682M351.5 78V682M70 259.5H627M70 319.5H627M70 379.5H627M70 458.5H627M70 498.5H627" fill="none" stroke="#800000"/><circle cx="351.5" cy="379.5" r="6.4" fill="none" stroke="#ff0000" stroke-width="1.1" shape-rendering="auto"/><path d="M351.5 379.5H345.2A6.3 6.3 0 0 0 351.5 385.8Z" fill="#ff0000" shape-rendering="auto"/><path d="M351.5 370V389M342 379.5H361" stroke="#800000" fill="none"/></svg>
<div class="a" style="left:468px;top:231px;width:122px;height:25px"><div class="a" style="left:0;top:0;width:122px;height:25px;background:#cfcdd0;border-top:1px solid #7a7a7a;border-left:1px solid #111;border-right:1px solid #7a7a7a;border-bottom:1px solid #7a7a7a;box-shadow:0 -1px 0 #a8a8a8"></div><div class="a" style="left:1px;top:1px;width:120px;height:23px;border-top:1px solid #fff;border-left:1px solid #fff;border-right:1px solid #bdbbbe;border-bottom:1px solid #f4f4f4"></div><div class="a t" style="left:7px;top:5.5px;font-size:12.5px">Distance:</div><div class="a" style="left:63px;top:5px;width:56px;height:17px;background:#fffab8;border-top:1px solid #000;border-left:1px solid #000;border-right:1px solid #fff;border-bottom:1px solid #fff;box-shadow:inset 1px 1px 0 #2a2a2a"></div><div class="a t" style="left:69px;top:6px;font-size:14px;font-weight:bold;color:#4d4500">60</div></div>
<div class="a" style="left:469px;top:292px;width:122px;height:25px"><div class="a" style="left:0;top:0;width:122px;height:25px;background:#cfcdd0;border-top:1px solid #7a7a7a;border-left:1px solid #111;border-right:1px solid #7a7a7a;border-bottom:1px solid #7a7a7a;box-shadow:0 -1px 0 #a8a8a8"></div><div class="a" style="left:1px;top:1px;width:120px;height:23px;border-top:1px solid #fff;border-left:1px solid #fff;border-right:1px solid #bdbbbe;border-bottom:1px solid #f4f4f4"></div><div class="a t" style="left:7px;top:5.5px;font-size:12.5px">Distance:</div><div class="a" style="left:63px;top:5px;width:56px;height:17px;background:#fffab8;border-top:1px solid #000;border-left:1px solid #000;border-right:1px solid #fff;border-bottom:1px solid #fff;box-shadow:inset 1px 1px 0 #2a2a2a"></div><div class="a t" style="left:69px;top:6px;font-size:14px;font-weight:bold;color:#4d4500">30</div></div>
<div class="a" style="left:471px;top:430px;width:122px;height:25px"><div class="a" style="left:0;top:0;width:122px;height:25px;background:#cfcdd0;border-top:1px solid #7a7a7a;border-left:1px solid #111;border-right:1px solid #7a7a7a;border-bottom:1px solid #7a7a7a;box-shadow:0 -1px 0 #a8a8a8"></div><div class="a" style="left:1px;top:1px;width:120px;height:23px;border-top:1px solid #fff;border-left:1px solid #fff;border-right:1px solid #bdbbbe;border-bottom:1px solid #f4f4f4"></div><div class="a t" style="left:7px;top:5.5px;font-size:12.5px">Distance:</div><div class="a" style="left:63px;top:5px;width:56px;height:17px;background:#fffab8;border-top:1px solid #000;border-left:1px solid #000;border-right:1px solid #fff;border-bottom:1px solid #fff;box-shadow:inset 1px 1px 0 #2a2a2a"></div><div class="a t" style="left:69px;top:6px;font-size:14px;font-weight:bold;color:#4d4500">40</div></div>
<div class="a" style="left:472px;top:471px;width:122px;height:25px"><div class="a" style="left:0;top:0;width:122px;height:25px;background:#cfcdd0;border-top:1px solid #7a7a7a;border-left:1px solid #111;border-right:1px solid #7a7a7a;border-bottom:1px solid #7a7a7a;box-shadow:0 -1px 0 #a8a8a8"></div><div class="a" style="left:1px;top:1px;width:120px;height:23px;border-top:1px solid #fff;border-left:1px solid #fff;border-right:1px solid #bdbbbe;border-bottom:1px solid #f4f4f4"></div><div class="a t" style="left:7px;top:5.5px;font-size:12.5px">Distance:</div><div class="a" style="left:63px;top:5px;width:56px;height:17px;background:#fffab8;border-top:1px solid #000;border-left:1px solid #000;border-right:1px solid #fff;border-bottom:1px solid #fff;box-shadow:inset 1px 1px 0 #2a2a2a"></div><div class="a t" style="left:69px;top:6px;font-size:14px;font-weight:bold;color:#4d4500">60</div></div>
<div class="a" style="left:213px;top:238px;width:122px;height:25px;transform:rotate(-90deg);transform-origin:0 0"><div class="a" style="left:0;top:0;width:122px;height:25px;background:#cfcdd0;border-top:1px solid #7a7a7a;border-left:1px solid #111;border-right:1px solid #7a7a7a;border-bottom:1px solid #7a7a7a;box-shadow:0 -1px 0 #a8a8a8"></div><div class="a" style="left:1px;top:1px;width:120px;height:23px;border-top:1px solid #fff;border-left:1px solid #fff;border-right:1px solid #bdbbbe;border-bottom:1px solid #f4f4f4"></div><div class="a t" style="left:7px;top:5.5px;font-size:12.5px">Distance:</div><div class="a" style="left:63px;top:5px;width:56px;height:17px;background:#fffab8;border-top:1px solid #000;border-left:1px solid #000;border-right:1px solid #fff;border-bottom:1px solid #fff;box-shadow:inset 1px 1px 0 #2a2a2a"></div><div class="a t" style="left:67.5px;top:6px;font-size:14px;font-weight:bold;color:#4d4500">60</div></div>
<div class="a" style="left:245px;top:238px;width:122px;height:25px;transform:rotate(-90deg);transform-origin:0 0"><div class="a" style="left:0;top:0;width:122px;height:25px;background:#cfcdd0;border-top:1px solid #7a7a7a;border-left:1px solid #111;border-right:1px solid #7a7a7a;border-bottom:1px solid #7a7a7a;box-shadow:0 -1px 0 #a8a8a8"></div><div class="a" style="left:1px;top:1px;width:120px;height:23px;border-top:1px solid #fff;border-left:1px solid #fff;border-right:1px solid #bdbbbe;border-bottom:1px solid #f4f4f4"></div><div class="a t" style="left:7px;top:5.5px;font-size:12.5px">Distance:</div><div class="a" style="left:63px;top:5px;width:56px;height:17px;background:#fffab8;border-top:1px solid #000;border-left:1px solid #000;border-right:1px solid #fff;border-bottom:1px solid #fff;box-shadow:inset 1px 1px 0 #2a2a2a"></div><div class="a t" style="left:67.5px;top:6px;font-size:14px;font-weight:bold;color:#4d4500">50</div></div>
<div class="a" style="left:289px;top:238px;width:122px;height:25px;transform:rotate(-90deg);transform-origin:0 0"><div class="a" style="left:0;top:0;width:122px;height:25px;background:#cfcdd0;border-top:1px solid #7a7a7a;border-left:1px solid #111;border-right:1px solid #7a7a7a;border-bottom:1px solid #7a7a7a;box-shadow:0 -1px 0 #a8a8a8"></div><div class="a" style="left:1px;top:1px;width:120px;height:23px;border-top:1px solid #fff;border-left:1px solid #fff;border-right:1px solid #bdbbbe;border-bottom:1px solid #f4f4f4"></div><div class="a t" style="left:7px;top:5.5px;font-size:12.5px">Distance:</div><div class="a" style="left:63px;top:5px;width:56px;height:17px;background:#fffab8;border-top:1px solid #000;border-left:1px solid #000;border-right:1px solid #fff;border-bottom:1px solid #fff;box-shadow:inset 1px 1px 0 #2a2a2a"></div><div class="a t" style="left:67.5px;top:6px;font-size:14px;font-weight:bold;color:#4d4500">25</div></div>
<div class="a" style="left:69px;top:76px;width:119px;height:23px;background:#cfcdd0;border-top:1px solid #fff;border-left:1px solid #fff;border-right:1px solid #868686;border-bottom:1px solid #868686"></div>
<div class="a t" style="left:74px;top:79.5px;font-size:12.5px">Distance:</div>
<div class="a" style="left:129px;top:77px;width:56px;height:17px;background:#fffab8;border-top:1px solid #868686;border-left:1px solid #868686;border-right:1px solid #fff;border-bottom:1px solid #fff;box-shadow:inset 1px 1px 0 #000"></div>
<div class="a t" style="left:138px;top:79.5px;font-size:14px;font-weight:bold;color:#4d4500">60</div>
<div class="a t" style="left:374px;top:239px;font-size:23px;font-weight:bold;color:#ff1400;transform:scaleX(0.955);transform-origin:0 0">5’</div>
<div class="a t" style="left:375px;top:298px;font-size:23px;font-weight:bold;color:#ff1400;transform:scaleX(0.955);transform-origin:0 0">6</div>
<div class="a t" style="left:220px;top:346px;font-size:23px;font-weight:bold;color:#ff1400;transform:scaleX(0.955);transform-origin:0 0">1</div>
<div class="a t" style="left:236px;top:346px;font-size:23px;font-weight:bold;color:#ff1400;transform:scaleX(0.955);transform-origin:0 0">2</div>
<div class="a t" style="left:287px;top:346px;font-size:23px;font-weight:bold;color:#ff1400;transform:scaleX(0.955);transform-origin:0 0">3</div>
<div class="a t" style="left:376px;top:360px;font-size:23px;font-weight:bold;color:#ff1400;transform:scaleX(0.955);transform-origin:0 0">4</div>
<div class="a t" style="left:405px;top:360px;font-size:23px;font-weight:bold;color:#ff1400;transform:scaleX(0.955);transform-origin:0 0">Référence pour Y</div>
<div class="a t" style="left:377px;top:435.5px;font-size:23px;font-weight:bold;color:#ff1400;transform:scaleX(0.955);transform-origin:0 0">7</div>
<div class="a t" style="left:377px;top:477.5px;font-size:23px;font-weight:bold;color:#ff1400;transform:scaleX(0.955);transform-origin:0 0">5</div>
<div class="a t" style="left:329px;top:288px;font-size:23px;font-weight:bold;color:#ff1400;transform:rotate(-90deg) scaleX(0.955);transform-origin:0 0">Référence pour X</div>
<div class="a" style="left:628px;top:76px;width:2px;height:608px;background:#f4f4f4"></div>
<div class="a" style="left:630px;top:75px;width:75px;height:609px;border-left:1px solid #000;border-top:1px solid #000"></div>
<div class="a" style="left:631px;top:76px;width:73px;height:607px;background:#fff;border-left:1px solid #b8b6b8;border-top:1px solid #b8b6b8"></div>
<div class="a" style="left:704px;top:75px;width:1px;height:610px;background:#fff"></div>
<div class="a" style="left:704px;top:75px;width:31px;height:1px;background:#f4f4f4"></div>
<div class="a" style="left:729px;top:75px;width:1px;height:609px;background:#868686"></div>
<div class="a" style="left:730px;top:75px;width:1px;height:610px;background:#fff"></div>
<div class="a" style="left:734px;top:75px;width:1px;height:610px;background:#868686"></div>
<div class="a" style="left:735px;top:75px;width:1px;height:610px;background:#000"></div>
<div class="a" style="left:705px;top:684px;width:25px;height:1px;background:#868686"></div>
<div class="a" style="left:632px;top:109px;width:71px;height:16px;background:#4f4210"></div>
<svg style="left:635px;top:78px" width="15" height="12" viewBox="0 0 15 12"><path d="M0.5 5C3 1 9 0 13.5 4L14 6.5C11 10 5 11 1 6.5Z" fill="#fff"/><path d="M1 5.5C3 1.5 9 0.3 13 3.8" stroke="#000" fill="none" stroke-width="1.6"/><circle cx="8" cy="5.2" r="3.3" fill="#000"/><circle cx="6.5" cy="4" r="0.9" fill="#808080"/><path d="M2 7.5C5 10.5 10 10 13.5 6" stroke="#909090" fill="none" stroke-width="1.2"/></svg>
<div class="a t" style="left:651px;top:79px;font-size:12.5px;color:#000;width:52px;overflow:hidden">(null)</div>
<svg style="left:635px;top:94px" width="15" height="12" viewBox="0 0 15 12"><path d="M0.5 5C3 1 9 0 13.5 4L14 6.5C11 10 5 11 1 6.5Z" fill="#fff"/><path d="M1 5.5C3 1.5 9 0.3 13 3.8" stroke="#000" fill="none" stroke-width="1.6"/><circle cx="8" cy="5.2" r="3.3" fill="#000"/><circle cx="6.5" cy="4" r="0.9" fill="#808080"/><path d="M2 7.5C5 10.5 10 10 13.5 6" stroke="#909090" fill="none" stroke-width="1.2"/></svg>
<div class="a t" style="left:651px;top:95px;font-size:12.5px;color:#000;width:52px;overflow:hidden">Foramt A-</div>
<svg style="left:635px;top:110px" width="15" height="12" viewBox="0 0 15 12"><path d="M1 5.5C3 1.5 9 0.3 13 3.8" stroke="#e8dc90" fill="none" stroke-width="1.8"/><circle cx="8" cy="5.8" r="3.6" fill="#4f4210" stroke="#f0e4a0" stroke-width="2"/><circle cx="7.5" cy="5" r="1" fill="#c8b870"/><path d="M1.5 6.5C4 10.5 10 11 13.5 6.5" stroke="#e0d490" fill="none" stroke-width="1.5"/><path d="M13 2.5L14 4" stroke="#f0e4a0" stroke-width="1"/></svg>
<div class="a t" style="left:651px;top:111px;font-size:12.5px;color:#f4eca8;width:52px;overflow:hidden">Trait</div>
<svg style="left:635px;top:126px" width="15" height="12" viewBox="0 0 15 12"><path d="M0.5 5C3 1 9 0 13.5 4L14 6.5C11 10 5 11 1 6.5Z" fill="#fff"/><path d="M1 5.5C3 1.5 9 0.3 13 3.8" stroke="#000" fill="none" stroke-width="1.6"/><circle cx="8" cy="5.2" r="3.3" fill="#000"/><circle cx="6.5" cy="4" r="0.9" fill="#808080"/><path d="M2 7.5C5 10.5 10 10 13.5 6" stroke="#909090" fill="none" stroke-width="1.2"/></svg>
<div class="a t" style="left:651px;top:127px;font-size:12.5px;color:#000;width:52px;overflow:hidden">default</div>
<div class="a" style="left:632px;top:667px;width:71px;height:16px;background:#cfcdd0"></div>
<div class="a" style="left:683px;top:667px;width:4px;height:15px;background:repeating-linear-gradient(45deg,#e8e8e8 0 1px,#d0d0d0 1px 2px)"></div>
<div class="a" style="left:632px;top:667px;width:16px;height:16px;background:#cfcdd0;border-top:1px solid #fff;border-left:1px solid #fff;border-right:1px solid #000;border-bottom:1px solid #000;box-shadow:inset -1px -1px 0 #868686"></div>
<div class="a" style="left:648px;top:667px;width:35px;height:16px;background:#cfcdd0;border-top:1px solid #fff;border-left:1px solid #fff;border-right:1px solid #000;border-bottom:1px solid #000;box-shadow:inset -1px -1px 0 #868686"></div>
<div class="a" style="left:687px;top:667px;width:16px;height:16px;background:#cfcdd0;border-top:1px solid #fff;border-left:1px solid #fff;border-right:1px solid #000;border-bottom:1px solid #000;box-shadow:inset -1px -1px 0 #868686"></div>
<svg style="left:637px;top:671px" width="6" height="9"><path d="M5 0V8L1 4Z" fill="#000"/></svg>
<svg style="left:693px;top:671px" width="6" height="9"><path d="M1 0V8L5 4Z" fill="#000"/></svg>
<svg style="left:710px;top:82px" width="15" height="12" viewBox="0 0 15 12"><path d="M0.5 5C3 1 9 0 13.5 4L14 6.5C11 10 5 11 1 6.5Z" fill="#fff"/><path d="M1 5.5C3 1.5 9 0.3 13 3.8" stroke="#000" fill="none" stroke-width="1.6"/><circle cx="8" cy="5.2" r="3.3" fill="#000"/><circle cx="6.5" cy="4" r="0.9" fill="#808080"/><path d="M2 7.5C5 10.5 10 10 13.5 6" stroke="#909090" fill="none" stroke-width="1.2"/></svg>
<svg style="left:710px;top:104px" width="15" height="11" viewBox="0 0 15 11"><path d="M1 3L3 1.5H11L13.5 3.5L14 7L12 9.5L9 10.5H4L1 8Z" fill="#b4b2b4"/><path d="M1.5 5.5L4 8.5H8" stroke="#fff" fill="none" stroke-width="1.3"/><circle cx="2.3" cy="2.5" r="0.8" fill="#fff"/><path d="M11.5 6V8" stroke="#fff" stroke-width="1"/></svg>
<svg style="left:705px;top:120px" width="24" height="100" viewBox="705 120 24 100"><path d="M712.5 132.5H721.5M717 128V137" stroke="#0000ff" stroke-width="2"/><path d="M714 154H720.5" stroke="#0000ff" stroke-width="2.2"/><path d="M711.5 194L715 192L720 193.5L724 196L722 203L719 205L714 203.5Z" fill="#b8b8b8"/><path d="M713 193L719 195.5" stroke="#000" stroke-width="1.6"/><path d="M723.5 197L719.5 205" stroke="#202020" stroke-width="2.5"/><path d="M715 197.5A2.5 2.5 0 1 0 718.5 200" stroke="#70d070" fill="none" stroke-width="1.1"/><path d="M716 199H719" stroke="#000" stroke-width="0.8"/><path d="M706 211.5H728" stroke="#868686"/><path d="M706 212.5H728" stroke="#fff"/></svg>
<div class="a t" style="left:709px;top:173px;font-size:7.5px;font-weight:bold;letter-spacing:0.3px">REN</div>
<div class="a t" style="left:593px;top:668px;font-size:12px;background:#fff;padding-left:1px">10,00</div>
<div class="a" style="left:68px;top:683px;width:636px;height:2px;background:#f0f0f0"></div>
<div class="a" style="left:704px;top:683px;width:1px;height:2px;background:#fff"></div>
<div class="a" style="left:705px;top:684px;width:25px;height:1px;background:#868686"></div>
<div class="a" style="left:730px;top:684px;width:5px;height:1px;background:#868686"></div>
<div class="a" style="left:1px;top:685px;width:735px;height:1px;background:#fff"></div>
<div class="a" style="left:1px;top:732px;width:735px;height:2px;background:#0d1626"></div>
<div class="a" style="left:1px;top:734px;width:735px;height:8px;background:linear-gradient(90deg,#2e4b78,#1d2d4a)"></div>
<div class="a" style="left:30px;top:735px;width:1px;height:7px;background:#8cacd8"></div>
<div class="a" style="left:706px;top:735px;width:1px;height:7px;background:#8ca8cc"></div>
<div class="a" style="left:246px;top:688px;width:1px;height:43px;background:#868686"></div>
<div class="a" style="left:247px;top:688px;width:1px;height:43px;background:#fff"></div>
<div class="a" style="left:491px;top:688px;width:1px;height:43px;background:#868686"></div>
<div class="a" style="left:492px;top:688px;width:1px;height:43px;background:#fff"></div>
<div class="a t" style="left:23.5px;top:698px;font-size:26px;font-weight:bold;color:#ff1800;transform:scaleX(0.99);transform-origin:0 0">1/2 PROFIL</div>
<div class="a t" style="left:175px;top:698.5px;font-size:25px;font-weight:bold;color:#ff1800;transform:scaleX(0.96);transform-origin:0 0">esquisse</div>
<div class="a t" style="left:300px;top:688.5px;font-size:12.5px">L: Parallel</div>
<div class="a t" style="left:379px;top:688.5px;font-size:12.5px">R: Back</div>
<div class="a t" style="left:493px;top:689px;font-size:12.5px">Create parallels</div>
<svg style="left:355px;top:690px" width="28" height="36" viewBox="355 690 28 36"><path d="M368.5 700.5V697C368.5 695.5 367 695 366.5 693.5M366.5 696C367 694 366 693 365.5 692.5" stroke="#000" fill="none" stroke-width="1"/><path d="M359.5 701.5C359.5 700.5 360 700.5 361 700.5H376C377 700.5 377.5 700.5 377.5 701.5V716C377.5 721 374 724.5 368.5 724.5C363 724.5 359.5 721 359.5 716Z" fill="#fff" stroke="#000" stroke-width="1.1"/><path d="M359.5 707.5H377.5M365.5 700.5V707.5M371.5 700.5V707.5" stroke="#000" stroke-width="1.1"/><path d="M361 716C363 721 368 723 372 722" stroke="#c0c0c0" fill="none" stroke-width="2" stroke-dasharray="1 1"/></svg></div></body></html>
